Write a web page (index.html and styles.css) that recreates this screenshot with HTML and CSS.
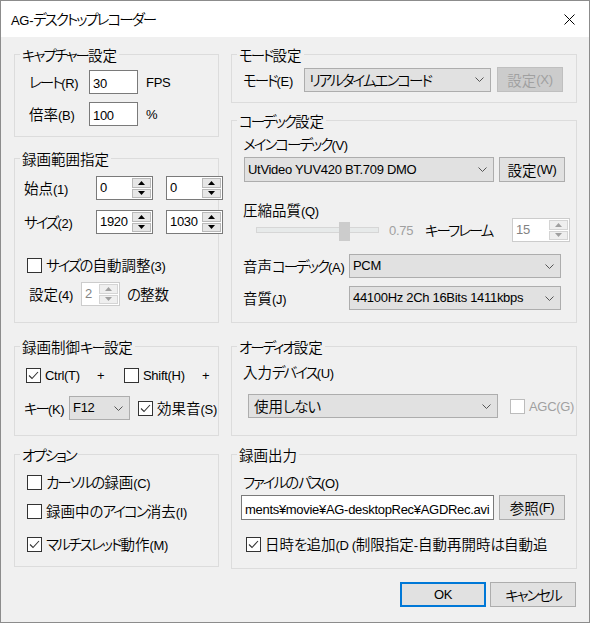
FILE: index.html
```html
<!DOCTYPE html>
<html lang="ja">
<head>
<meta charset="utf-8">
<title>AG-デスクトップレコーダー</title>
<link rel="stylesheet" href="styles.css">
</head>
<body>
<div class="window">
  <div class="titlebar">
    <span class="title"><span class="e">AG-</span><span class="k">デスクトップレコーダー</span></span>
    <svg class="close" viewBox="0 0 11 11" width="11" height="11"><path d="M0.5 0.5 L10.5 10.5 M10.5 0.5 L0.5 10.5" stroke="#000" stroke-width="1" fill="none"/></svg>
  </div>
  <div class="content">
    <div class="columns">
      <div class="col col-l">
        <fieldset class="grp g-cap">
          <legend><span class="k">キャプチャー</span>設定</legend>
          <div class="cap-grid">
            <span class="lbl"><span class="k">レート</span><span class="e">(R)</span></span><div class="edit e-num"><span class="e">30</span></div><span class="unit e">FPS</span>
            <span class="lbl">倍率<span class="e">(B)</span></span><div class="edit e-num"><span class="e">100</span></div><span class="unit e">%</span>
          </div>
        </fieldset>

        <fieldset class="grp g-range">
          <legend>録画範囲指定</legend>
          <div class="range">
            <div class="range-grid">
              <span class="lbl">始点<span class="e">(1)</span></span>
              <div class="spin s-57"><span class="sval e">0</span><span class="sbtns"><span class="sb"><svg viewBox="0 0 7 4" width="7" height="4"><path d="M0 4 L3.5 0 L7 4Z" fill="#000"/></svg></span><span class="sb"><svg viewBox="0 0 7 4" width="7" height="4"><path d="M0 0 L3.5 4 L7 0Z" fill="#000"/></svg></span></span></div>
              <div class="spin s-57"><span class="sval e">0</span><span class="sbtns"><span class="sb"><svg viewBox="0 0 7 4" width="7" height="4"><path d="M0 4 L3.5 0 L7 4Z" fill="#000"/></svg></span><span class="sb"><svg viewBox="0 0 7 4" width="7" height="4"><path d="M0 0 L3.5 4 L7 0Z" fill="#000"/></svg></span></span></div>
              <span class="lbl"><span class="k">サイズ</span><span class="e">(2)</span></span>
              <div class="spin s-57"><span class="sval e">1920</span><span class="sbtns"><span class="sb"><svg viewBox="0 0 7 4" width="7" height="4"><path d="M0 4 L3.5 0 L7 4Z" fill="#000"/></svg></span><span class="sb"><svg viewBox="0 0 7 4" width="7" height="4"><path d="M0 0 L3.5 4 L7 0Z" fill="#000"/></svg></span></span></div>
              <div class="spin s-57"><span class="sval e">1030</span><span class="sbtns"><span class="sb"><svg viewBox="0 0 7 4" width="7" height="4"><path d="M0 4 L3.5 0 L7 4Z" fill="#000"/></svg></span><span class="sb"><svg viewBox="0 0 7 4" width="7" height="4"><path d="M0 0 L3.5 4 L7 0Z" fill="#000"/></svg></span></span></div>
            </div>
            <div class="cbrow r-auto"><span class="cb"></span><span class="cbt"><span class="k">サイズ</span><span class="h">の</span>自動調整<span class="e">(3)</span></span></div>
            <div class="row r-mult">
              <span class="lbl l-mult">設定<span class="e">(4)</span></span>
              <div class="spin s-39 dis"><span class="sval e">2</span><span class="sbtns"><span class="sb"><svg viewBox="0 0 7 4" width="7" height="4"><path d="M0 4 L3.5 0 L7 4Z" fill="#a0a0a0"/></svg></span><span class="sb"><svg viewBox="0 0 7 4" width="7" height="4"><path d="M0 0 L3.5 4 L7 0Z" fill="#a0a0a0"/></svg></span></span></div>
              <span class="u-mult"><span class="h">の</span>整数</span>
            </div>
          </div>
        </fieldset>

        <fieldset class="grp g-key">
          <legend>録画制御<span class="k">キー</span>設定</legend>
          <div class="keys">
            <div class="row r-mod">
              <span class="cbrow i-ctrl"><span class="cb"><svg viewBox="0 0 13 13" width="13" height="13"><polyline points="2,6.5 5,9.5 11,3" fill="none" stroke="#333" stroke-width="1.1"/></svg></span><span class="cbt e">Ctrl(T)</span></span>
              <span class="plus e">+</span>
              <span class="cbrow i-shift"><span class="cb"></span><span class="cbt e">Shift(H)</span></span>
              <span class="plus e">+</span>
            </div>
            <div class="row r-key">
              <span class="lbl l-key"><span class="k">キー</span><span class="e">(K)</span></span>
              <div class="combo c-key"><span class="ctext e">F12</span><svg class="chev" viewBox="0 0 9 5" width="9" height="5"><polyline points="0.5,0.5 4.5,4.5 8.5,0.5" fill="none" stroke="#555" stroke-width="1"/></svg></div>
              <span class="cbrow i-snd"><span class="cb"><svg viewBox="0 0 13 13" width="13" height="13"><polyline points="2,6.5 5,9.5 11,3" fill="none" stroke="#333" stroke-width="1.1"/></svg></span><span class="cbt">効果音<span class="e">(S)</span></span></span>
            </div>
          </div>
        </fieldset>

        <fieldset class="grp g-opt">
          <legend><span class="k">オプション</span></legend>
          <div class="opts">
            <div class="cbrow o1"><span class="cb"></span><span class="cbt"><span class="k">カーソル</span><span class="h">の</span>録画<span class="e">(C)</span></span></div>
            <div class="cbrow o2"><span class="cb"></span><span class="cbt">録画中<span class="h">の</span><span class="k">アイコン</span>消去<span class="e">(I)</span></span></div>
            <div class="cbrow o3"><span class="cb"><svg viewBox="0 0 13 13" width="13" height="13"><polyline points="2,6.5 5,9.5 11,3" fill="none" stroke="#333" stroke-width="1.1"/></svg></span><span class="cbt"><span class="k">マルチスレッド</span>動作<span class="e">(M)</span></span></div>
          </div>
        </fieldset>
      </div>

      <div class="col col-r">
        <fieldset class="grp g-mode">
          <legend><span class="k">モード</span>設定</legend>
          <div class="row r-modesel">
            <span class="lbl l-mode"><span class="k">モード</span><span class="e">(E)</span></span>
            <div class="combo c-mode"><span class="ctext k">リアルタイムエンコード</span><svg class="chev" viewBox="0 0 9 5" width="9" height="5"><polyline points="0.5,0.5 4.5,4.5 8.5,0.5" fill="none" stroke="#555" stroke-width="1"/></svg></div>
            <div class="btn btn-dis b-mode">設定<span class="e">(X)</span></div>
          </div>
        </fieldset>

        <fieldset class="grp g-codec">
          <legend><span class="k">コーデック</span>設定</legend>
          <div class="codec">
            <div class="lbl-line l-main"><span class="k">メインコーデック</span><span class="e">(V)</span></div>
            <div class="row r-main">
              <div class="combo c-main"><span class="ctext e">UtVideo YUV420 BT.709 DMO</span><svg class="chev" viewBox="0 0 9 5" width="9" height="5"><polyline points="0.5,0.5 4.5,4.5 8.5,0.5" fill="none" stroke="#555" stroke-width="1"/></svg></div>
              <div class="btn b-main">設定<span class="e">(W)</span></div>
            </div>
            <div class="lbl-line l-q">圧縮品質<span class="e">(Q)</span></div>
            <div class="row r-slider">
              <div class="slider"><div class="track"></div><div class="thumb"></div></div>
              <span class="sl-val e">0.75</span>
              <span class="kf k">キーフレーム</span>
              <div class="spin s-58 dis"><span class="sval e">15</span><span class="sbtns"><span class="sb"><svg viewBox="0 0 7 4" width="7" height="4"><path d="M0 4 L3.5 0 L7 4Z" fill="#a0a0a0"/></svg></span><span class="sb"><svg viewBox="0 0 7 4" width="7" height="4"><path d="M0 0 L3.5 4 L7 0Z" fill="#a0a0a0"/></svg></span></span></div>
            </div>
            <div class="row r-ac">
              <span class="lbl l-ac">音声<span class="k">コーデック</span><span class="e">(A)</span></span>
              <div class="combo c-ac"><span class="ctext e">PCM</span><svg class="chev" viewBox="0 0 9 5" width="9" height="5"><polyline points="0.5,0.5 4.5,4.5 8.5,0.5" fill="none" stroke="#555" stroke-width="1"/></svg></div>
            </div>
            <div class="row r-aq">
              <span class="lbl l-ac">音質<span class="e">(J)</span></span>
              <div class="combo c-ac"><span class="ctext e">44100Hz 2Ch 16Bits 1411kbps</span><svg class="chev" viewBox="0 0 9 5" width="9" height="5"><polyline points="0.5,0.5 4.5,4.5 8.5,0.5" fill="none" stroke="#555" stroke-width="1"/></svg></div>
            </div>
          </div>
        </fieldset>

        <fieldset class="grp g-audio">
          <legend><span class="k">オーディオ</span>設定</legend>
          <div class="audio">
            <div class="lbl-line l-dev">入力<span class="k">デバイス</span><span class="e">(U)</span></div>
            <div class="row r-dev">
              <div class="combo c-dev"><span class="ctext">使用<span class="h">しない</span></span><svg class="chev" viewBox="0 0 9 5" width="9" height="5"><polyline points="0.5,0.5 4.5,4.5 8.5,0.5" fill="none" stroke="#555" stroke-width="1"/></svg></div>
              <span class="cbrow i-agc"><span class="cb cb-dis"></span><span class="cbt dis-text e">AGC(G)</span></span>
            </div>
          </div>
        </fieldset>

        <fieldset class="grp g-out">
          <legend>録画出力</legend>
          <div class="out">
            <div class="lbl-line l-path"><span class="k">ファイル</span><span class="h">の</span><span class="k">パス</span><span class="e">(O)</span></div>
            <div class="row r-path">
              <div class="edit e-path"><span class="e">ments¥movie¥AG-desktopRec¥AGDRec.avi</span></div>
              <div class="btn b-ref">参照<span class="e">(F)</span></div>
            </div>
            <div class="cbrow r-date"><span class="cb"><svg viewBox="0 0 13 13" width="13" height="13"><polyline points="2,6.5 5,9.5 11,3" fill="none" stroke="#333" stroke-width="1.1"/></svg></span><span class="cbt">日時<span class="h">を</span>追加<span class="e">(D (</span>制限指定<span class="e">-</span>自動再開時<span class="h">は</span>自動追</span></div>
          </div>
        </fieldset>
      </div>
    </div>

    <div class="btnrow">
      <div class="btn b-ok"><span class="e">OK</span></div>
      <div class="btn b-cancel"><span class="k">キャンセル</span></div>
    </div>
  </div>
</div>
</body>
</html>
```

FILE: styles.css
```css
* { box-sizing: border-box; }
html, body { margin: 0; padding: 0; }
body {
  width: 590px;
  height: 623px;
  overflow: hidden;
  background: #f0f0f0;
  color: #000;
  font-family: "Noto Sans CJK JP", "Noto Sans", sans-serif;
  font-weight: 350;
  font-size: 14.5px;
  line-height: 20px;
  font-feature-settings: "palt" 1;
}
.e {
  font-family: "Liberation Sans", Arial, sans-serif;
  font-weight: 400;
  font-size: 13px;
  letter-spacing: -0.3px;
  line-height: 1;
}
.k { letter-spacing: -2px; }
.h { letter-spacing: -1px; }
.window {
  width: 590px;
  height: 623px;
  border: 1px solid #8c8c8c;
  background: #f0f0f0;
  display: flex;
  flex-direction: column;
}
.titlebar {
  flex: none;
  height: 36px;
  background: #fff;
  display: flex;
  align-items: center;
  justify-content: space-between;
  padding: 0 14px 0 10px;
}
.title { line-height: 20px; }
.close { display: block; }

.content { padding: 10px 11px 0 13px; }
.columns { display: flex; gap: 12px; }
.col { display: flex; flex-direction: column; }
.col-l { width: 205px; }
.col-r { width: 346px; }

.grp {
  margin: 0;
  padding: 0;
  min-width: 0;
  border: 1px solid #dcdcdc;
}
.grp legend {
  margin-left: 5px;
  padding: 0 2px;
  line-height: 15px;
}
.g-cap { height: 90px; }
.g-range { height: 172px; margin-top: 14px; }
.g-key { height: 97px; margin-top: 16px; }
.g-opt { height: 120px; margin-top: 11px; }
.g-mode { height: 56px; }
.g-codec { height: 210px; margin-top: 10px; }
.g-audio { height: 97px; margin-top: 16px; }
.g-out { height: 122px; margin-top: 11px; }

.row { display: flex; align-items: center; white-space: nowrap; }
.row > * { flex: none; }
.lbl { white-space: nowrap; }
.lbl-line { line-height: 20px; height: 20px; white-space: nowrap; }

/* edit boxes */
.edit {
  height: 24px;
  background: #fff;
  border: 1px solid #7a7a7a;
  padding-left: 3px;
  line-height: 22px;
  overflow: hidden;
  white-space: nowrap;
}

/* combo boxes */
.combo {
  height: 24px;
  background: #e1e1e1;
  border: 1px solid #adadad;
  display: flex;
  align-items: center;
  justify-content: space-between;
  padding: 0 6px 0 3px;
}
.ctext { line-height: 20px; white-space: nowrap; }
.chev { display: block; flex: none; }

/* buttons */
.btn {
  height: 25px;
  background: #e1e1e1;
  border: 1px solid #adadad;
  display: flex;
  align-items: center;
  justify-content: center;
  flex: none;
  line-height: 20px;
}
.btn-dis { background: #cccccc; border-color: #bfbfbf; color: #a0a0a0; }

/* spinners */
.spin {
  height: 24px;
  border: 1px solid #7a7a7a;
  background: #fff;
  display: flex;
}
.sval { flex: 1; padding-left: 3px; line-height: 22px; }
.sbtns {
  width: 20px;
  display: flex;
  flex-direction: column;
  gap: 1px;
  padding: 1px 1px 1px 0;
}
.sb {
  flex: 1;
  background: #e6e6e6;
  border: 1px solid #b9b9b9;
  display: flex;
  align-items: center;
  justify-content: center;
}
.sb svg { display: block; }
.spin.dis { border-color: #cccccc; }
.spin.dis .sval { color: #838383; }
.spin.dis .sb { background: #efefef; border-color: #d4d4d4; }
.s-57 { width: 57px; }
.s-39 { width: 39px; }
.s-58 { width: 58px; }

/* checkboxes */
.cbrow { display: flex; align-items: center; white-space: nowrap; line-height: 20px; height: 20px; }
.cb {
  width: 15px;
  height: 15px;
  flex: none;
  border: 1px solid #333;
  background: #fff;
  margin-right: 4px;
}
.cb svg { display: block; }
.cb-dis { border-color: #bcbcbc; }
.dis-text { color: #a0a0a0; }

/* capture */
.cap-grid {
  display: grid;
  grid-template-columns: 60px 49px auto;
  grid-auto-rows: 24px;
  row-gap: 8px;
  align-items: center;
  padding: 8px 0 0 14px;
}
.e-num { width: 49px; }
.unit { margin-left: 8px; }

/* range */
.range { padding: 10px 0 0 9px; }
.range-grid {
  display: grid;
  grid-template-columns: 59px 57px 57px;
  grid-auto-rows: 24px;
  column-gap: 13px;
  row-gap: 10px;
  align-items: center;
}
.r-auto { margin: 21px 0 0 3px; }
.r-mult { margin: 7px 0 0 5px; }
.l-mult { width: 52px; }
.u-mult { margin-left: 7px; }

/* keys */
.keys { padding: 11px 0 0 11px; }
.r-mod { height: 20px; }
.i-ctrl { width: 71px; }
.plus { width: 27px; }
.i-shift { width: 78px; }
.r-key { margin: 11px 0 0 -2px; width: 194px; overflow: hidden; }
.l-key { width: 45px; }
.c-key { width: 61px; }
.i-snd { margin-left: 8px; }

/* options */
.opts { padding: 10px 0 0 12px; }
.o2 { margin-top: 9px; }
.o3 { margin-top: 13px; }

/* mode */
.r-modesel { padding: 5px 0 0 11px; height: 30px; }
.l-mode { width: 61px; }
.c-mode { width: 187px; padding-left: 4px; }
.b-mode { width: 66px; margin-left: 6px; }

/* codec */
.codec { padding: 6px 0 0 11px; }
.r-main { margin: 3px 0 0 1px; height: 25px; }
.c-main { width: 250px; height: 25px; }
.b-main { width: 66px; margin-left: 5px; }
.l-q { margin-top: 18px; }
.r-slider { height: 24px; margin-top: -2px; }
.slider { position: relative; width: 123px; height: 24px; margin-left: 13px; }
.track {
  position: absolute;
  left: 0; right: 0; top: 9px;
  height: 6px;
  background: #e7eaea;
  border: 1px solid #d6d6d6;
}
.thumb {
  position: absolute;
  left: 83px; top: 4px;
  width: 11px; height: 19px;
  background: #cccccc;
}
.sl-val { width: 36px; margin-left: 10px; color: #a0a0a0; }
.kf { width: 87px; }
.r-ac { margin-top: 12px; }
.r-aq { margin-top: 8px; }
.l-ac { width: 106px; }
.c-ac { width: 212px; }

/* audio */
.audio { padding: 8px 0 0 11px; }
.r-dev { margin: 12px 0 0 5px; }
.c-dev { width: 250px; padding-left: 5px; }
.i-agc { margin-left: 12px; }

/* output */
.out { padding: 10px 0 0 11px; }
.r-path { margin: 3px 0 0 -2px; height: 25px; }
.e-path { width: 253px; height: 25px; line-height: 23px; }
.b-ref { width: 66px; margin-left: 5px; }
.r-date { margin: 14px 0 0 3px; width: 314px; overflow: hidden; }

/* dialog buttons */
.btnrow {
  display: flex;
  justify-content: flex-end;
  gap: 4px;
  width: 563px;
  margin-top: 13px;
  padding-right: 1px;
}
.b-ok { width: 86px; border: 2px solid #0078d7; }
.b-cancel { width: 86px; }
```
